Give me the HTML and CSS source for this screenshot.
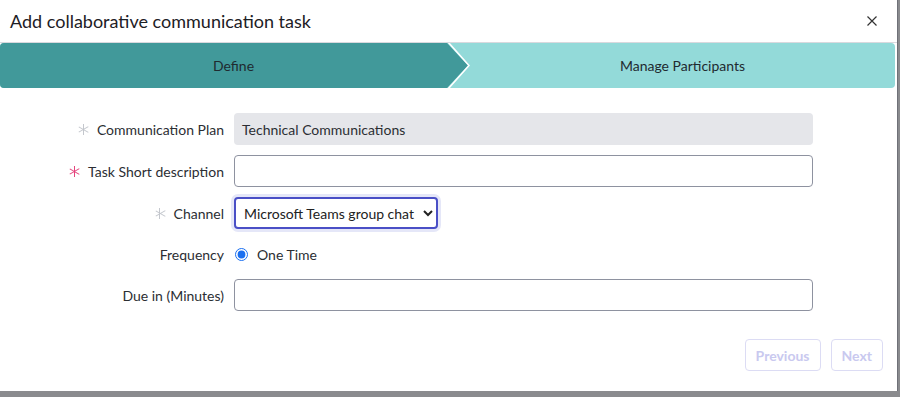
FILE: index.html
```html
<!DOCTYPE html>
<html lang="en">
<head>
  <meta charset="UTF-8" />
  <title>Add collaborative communication task</title>
  <link rel="stylesheet" href="styles.css">
</head>
<body>
  <div class="modal">
    <!-- Header -->
    <div class="modal-header">
      <h1>Add collaborative communication task</h1>
      <button class="close" aria-label="Close">
        <svg width="10" height="10" viewBox="0 0 10 10"><path d="M0.5 0.5L9.5 9.5M9.5 0.5L0.5 9.5" stroke="#333" stroke-width="1.2" fill="none"/></svg>
      </button>
    </div>
    <!-- Stepper -->
    <div class="stepper">
      <div class="step step-active">Define</div>
      <svg class="step-arrow" width="23" height="45" viewBox="0 0 23 45">
        <polygon points="0,0 21,22.5 0,45" fill="#41999a"/>
        <polyline points="1,-1 22,22.5 1,46" fill="none" stroke="#fff" stroke-width="1.6"/>
      </svg>
      <div class="step">Manage Participants</div>
    </div>
    <!-- Form -->
    <div class="form">
      <div class="row">
        <label class="label"><span class="star"></span>Communication Plan</label>
        <div class="field readonly">Technical Communications</div>
      </div>
      <div class="row">
        <label class="label" for="shortDesc"><span class="star required"></span>Task Short description</label>
        <input type="text" id="shortDesc" class="field">
      </div>
      <div class="row">
        <label class="label" for="channel"><span class="star"></span>Channel</label>
        <select id="channel" class="select">
          <option>Microsoft Teams group chat</option>
        </select>
      </div>
      <div class="row row-radio">
        <label class="label">Frequency</label>
        <label class="radio"><input type="radio" name="freq" checked> One Time</label>
      </div>
      <div class="row">
        <label class="label" for="due">Due in (Minutes)</label>
        <input type="text" id="due" class="field">
      </div>
    </div>
    <!-- Footer -->
    <div class="modal-footer">
      <button class="btn" disabled>Previous</button>
      <button class="btn" disabled>Next</button>
    </div>
  </div>
</body>
</html>
```

FILE: styles.css
```css
body {
  margin: 0;
  background: #8a8b8e;
  font-family: Lato, "Open Sans", sans-serif;
  color: #2e3137;
}
.modal {
  width: 897px;
  height: 391px;
  background: #fff;
  border-right: 1px solid #6f7178;
  display: flex;
  flex-direction: column;
}
.modal-header {
  height: 42px;
  border-bottom: 1px solid #d9d9de;
  display: flex;
  align-items: center;
  justify-content: space-between;
  padding: 0 20px 0 10px;
}
.modal-header h1 {
  margin: 0;
  font-size: 18px;
  font-weight: 400;
  color: #1d2025;
}
.close {
  border: 0;
  background: none;
  padding: 0;
  display: flex;
}
.stepper {
  display: flex;
  height: 45px;
  margin-right: 2px;
  background: #93dad9;
  border-radius: 4px;
  overflow: hidden;
  font-size: 14px;
  color: #1f2a30;
}
.step {
  flex: 1;
  display: flex;
  align-items: center;
  justify-content: center;
}
.step-active {
  flex: 0 0 427px;
  padding-left: 20px;
  background: #41999a;
}
.step-arrow {
  flex: 0 0 23px;
  display: block;
}
.form {
  padding: 25px 0 0 0;
  display: flex;
  flex-direction: column;
  gap: 10px;
}
.row {
  display: flex;
  align-items: center;
  height: 32px;
}
.row-radio {
  height: 30px;
}
.label {
  width: 234px;
  padding-right: 10px;
  box-sizing: border-box;
  text-align: right;
  font-size: 14px;
  color: #2b2e33;
  display: flex;
  align-items: center;
  justify-content: flex-end;
}
.star {
  width: 11px;
  height: 11px;
  margin-right: 8px;
  background:
    linear-gradient(#c4c7cd, #c4c7cd) center / 1.2px 100% no-repeat;
  position: relative;
}
.star::before,
.star::after {
  content: "";
  position: absolute;
  left: 5px;
  top: 0;
  width: 1.2px;
  height: 11px;
  background: #c4c7cd;
  transform: rotate(60deg);
}
.star::after {
  transform: rotate(-60deg);
}
.star.required {
  background-image: linear-gradient(#e4457d, #e4457d);
}
.star.required::before,
.star.required::after {
  background: #e4457d;
}
.field {
  width: 579px;
  height: 32px;
  box-sizing: border-box;
  border: 1px solid #8e92a0;
  border-radius: 4px;
  font-family: inherit;
  font-size: 14px;
  padding: 0 8px;
  margin: 0;
}
.readonly {
  border: 0;
  background: #e5e6ea;
  display: flex;
  align-items: center;
  color: #2b2e33;
}
.select {
  width: 204px;
  height: 32px;
  border: 2px solid #4a4fc6;
  border-radius: 4px;
  box-shadow: 0 0 0 3px #e5e7f8;
  font-family: inherit;
  font-size: 14px;
  color: #222;
  background: #fff;
  padding: 0 4px;
  margin: 0;
}
.radio {
  display: flex;
  align-items: center;
  font-size: 14px;
  color: #2b2e33;
  gap: 9px;
}
.radio input {
  margin: 0 0 0 1px;
  width: 13px;
  height: 13px;
  accent-color: #1a6ff0;
}
.modal-footer {
  display: flex;
  justify-content: flex-end;
  gap: 10px;
  padding: 28px 14px 0 0;
}
.btn {
  height: 32px;
  padding: 0 10px;
  background: #fff;
  border: 1px solid #dcdcf4;
  border-radius: 4px;
  font-family: inherit;
  font-size: 14px;
  font-weight: 700;
  color: #c9c9ef;
}
```
